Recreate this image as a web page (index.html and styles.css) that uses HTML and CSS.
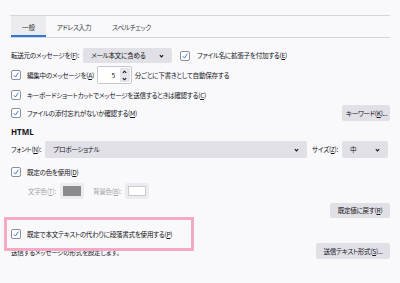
FILE: index.html
```html
<!DOCTYPE html>
<html lang="ja">
<head>
<meta charset="utf-8">
<link rel="stylesheet" href="styles.css">
</head>
<body>
<div class="page">
  <div class="tabs">
    <div class="tab active">一般</div>
    <div class="tab">アドレス入力</div>
    <div class="tab">スペルチェック</div>
  </div>

  <div class="row r1">
    <span class="label">転送元のメッセージを(<u>F</u>):</span>
    <div class="select s-forward"><span>メール本文に含める</span><svg class="chev" viewBox="0 0 6 4"><path d="M1 1l2 2 2-2"/></svg></div>
    <span class="cb cb-ext"><svg viewBox="0 0 10 10"><path d="M2.3 5.3l2 2.3 3.6-5.4"/></svg></span>
    <span class="label">ファイル名に拡張子を付加する(<u>E</u>)</span>
  </div>

  <div class="row r2">
    <span class="cb"><svg viewBox="0 0 10 10"><path d="M2.3 5.3l2 2.3 3.6-5.4"/></svg></span>
    <span class="label">編集中のメッセージを(<u>A</u>)</span>
    <div class="num"><span class="num-val">5</span><span class="spin"><svg viewBox="0 0 6 4"><path d="M1 3l2-2 2 2"/></svg><svg viewBox="0 0 6 4"><path d="M1 1l2 2 2-2"/></svg></span></div>
    <span class="label">分ごとに下書きとして自動保存する</span>
  </div>

  <div class="row r3">
    <span class="cb"><svg viewBox="0 0 10 10"><path d="M2.3 5.3l2 2.3 3.6-5.4"/></svg></span>
    <span class="label">キーボードショートカットでメッセージを送信するときは確認する(<u>C</u>)</span>
  </div>

  <div class="row r4">
    <span class="cb"><svg viewBox="0 0 10 10"><path d="M2.3 5.3l2 2.3 3.6-5.4"/></svg></span>
    <span class="label grow">ファイルの添付忘れがないか確認する(<u>M</u>)</span>
    <button class="btn b-kw">キーワード(<u>K</u>)...</button>
  </div>

  <div class="heading">HTML</div>

  <div class="row r5">
    <span class="label">フォント(<u>N</u>):</span>
    <div class="select s-font"><span>プロポーショナル</span><svg class="chev" viewBox="0 0 6 4"><path d="M1 1l2 2 2-2"/></svg></div>
    <span class="label">サイズ(<u>Z</u>):</span>
    <div class="select s-size"><span>中</span><svg class="chev" viewBox="0 0 6 4"><path d="M1 1l2 2 2-2"/></svg></div>
  </div>

  <div class="row r6">
    <span class="cb"><svg viewBox="0 0 10 10"><path d="M2.3 5.3l2 2.3 3.6-5.4"/></svg></span>
    <span class="label">既定の色を使用(<u>D</u>)</span>
  </div>

  <div class="row r7">
    <span class="label dim">文字色(<u>T</u>):</span>
    <span class="swatch"><span class="sw-inner sw-gray"></span></span>
    <span class="label dim bg-label">背景色(<u>B</u>):</span>
    <span class="swatch"><span class="sw-inner sw-white"></span></span>
  </div>

  <div class="row r8">
    <button class="btn b-reset">既定値に戻す(<u>R</u>)</button>
  </div>

  <div class="row r9">
    <span class="cb"><svg viewBox="0 0 10 10"><path d="M2.3 5.3l2 2.3 3.6-5.4"/></svg></span>
    <span class="label">既定で本文テキストの代わりに段落書式を使用する(<u>P</u>)</span>
  </div>

  <div class="row r10">
    <span class="label grow desc">送信するメッセージの形式を設定します。</span>
    <button class="btn b-send">送信テキスト形式(<u>S</u>)...</button>
  </div>

  <div class="highlight"></div>
</div>
</body>
</html>
```

FILE: styles.css
```css
* { box-sizing: border-box; }
html, body {
  margin: 0;
  padding: 0;
  background: #f9f9fb;
}
body {
  font-family: "Noto Sans CJK JP", "Noto Sans", sans-serif;
  font-size: 6.6px;
  letter-spacing: -0.3px;
  color: #15141a;
  font-feature-settings: "palt";
}
.page {
  position: relative;
  width: 400px;
  height: 283px;
  overflow: hidden;
  padding: 0 10px 0 11px;
}
u { text-decoration: underline; text-underline-offset: 1px; }

.tabs {
  display: flex;
  margin: 15px 0 0 -1px;
  height: 23px;
  border-top: 1px solid #d4d4da;
  border-bottom: 1px solid #d4d4da;
}
.tab {
  display: flex;
  align-items: center;
  padding: 0 10.5px;
  height: 21px;
  color: #3a3944;
}
.tab.active {
  background: #ececf0;
  border-bottom: 2px solid #2d7ad6;
  margin-left: 1px;
  padding: 2px 11px 0 11px;
  letter-spacing: 0;
}

.row {
  display: flex;
  align-items: center;
}
.label { white-space: nowrap; line-height: 1; }
.grow { flex: 1; }

.r1 { margin-top: 10px; height: 15px; }
.r2 { margin-top: 3px; height: 18px; }
.r3 { margin-top: 4px; height: 14px; }
.r4 { margin-top: 3px; height: 16px; }
.r5 { margin-top: 3px; height: 17px; padding-right: 2px; }
.r6 { margin-top: 7px; height: 14px; }
.r7 { margin-top: 4px; height: 16px; }
.r8 { margin-top: 4px; height: 15px; justify-content: flex-end; }
.r9 { margin-top: 10px; height: 12px; }
.r10 { margin-top: 3px; height: 16px; }

.heading {
  margin-top: 5px;
  height: 12px;
  line-height: 12px;
  font-family: "Noto Sans", sans-serif;
  font-weight: 700;
  font-size: 8px;
  letter-spacing: 0;
}

.select {
  display: flex;
  align-items: center;
  justify-content: space-between;
  height: 100%;
  background: #e0e0e6;
  border-radius: 2px;
  padding: 0 8px 0 8px;
  line-height: 1;
}
.chev {
  width: 5px;
  height: 4px;
  fill: none;
  stroke: #15141a;
  stroke-width: 1.4;
}
.s-forward { width: 89px; margin-left: 4px; }
.s-font { flex: 1; margin-left: 4px; margin-right: 5px; }
.s-size { width: 46px; margin-left: 4px; }

.cb {
  flex: none;
  width: 10px;
  height: 10px;
  background: #fff;
  border: 1px solid #8f8f9d;
  border-radius: 2px;
  display: flex;
  margin-right: 6px;
}
.cb svg {
  width: 8px;
  height: 8px;
  fill: none;
  stroke: #1f6fd6;
  stroke-width: 1.1;
}
.cb-ext { margin-left: 8px; margin-right: 7px; }

.num {
  display: flex;
  width: 35px;
  height: 18px;
  margin: 0 3px;
  background: #fff;
  border: 1px solid #c8c8d0;
  border-radius: 2px;
}
.num-val {
  flex: 1;
  display: flex;
  align-items: center;
  justify-content: flex-end;
  padding-right: 4px;
}
.spin {
  width: 10px;
  margin: 1px;
  background: #e4e4ea;
  display: flex;
  flex-direction: column;
  justify-content: space-around;
  align-items: center;
}
.spin svg {
  width: 5px;
  height: 4px;
  fill: none;
  stroke: #15141a;
  stroke-width: 1.3;
}

.btn {
  font: inherit;
  letter-spacing: inherit;
  color: inherit;
  border: none;
  background: #e0e0e6;
  border-radius: 2px;
  height: 100%;
  padding: 0 4px;
  line-height: 1;
  white-space: nowrap;
}
.b-kw { width: 48px; }
.b-reset { width: 60px; }
.b-send { width: 74px; }

.dim { color: #9f9fa8; }
.r7 .label:first-child { margin-left: 17px; }
.bg-label { margin-left: 9px; }
.swatch {
  display: flex;
  align-items: center;
  justify-content: center;
  width: 24px;
  height: 16px;
  margin-left: 4px;
  background: #ececf0;
  border-radius: 2px;
}
.sw-inner {
  width: 18px;
  height: 10px;
}
.sw-gray { background: #8a8a8e; }
.sw-white { background: #fff; border: 1px solid #c8c8d0; }

.desc { padding-top: 2px; }

.highlight {
  position: absolute;
  left: 4px;
  top: 217px;
  width: 190px;
  height: 34px;
  border: 3px solid #f4a9c7;
}
```
